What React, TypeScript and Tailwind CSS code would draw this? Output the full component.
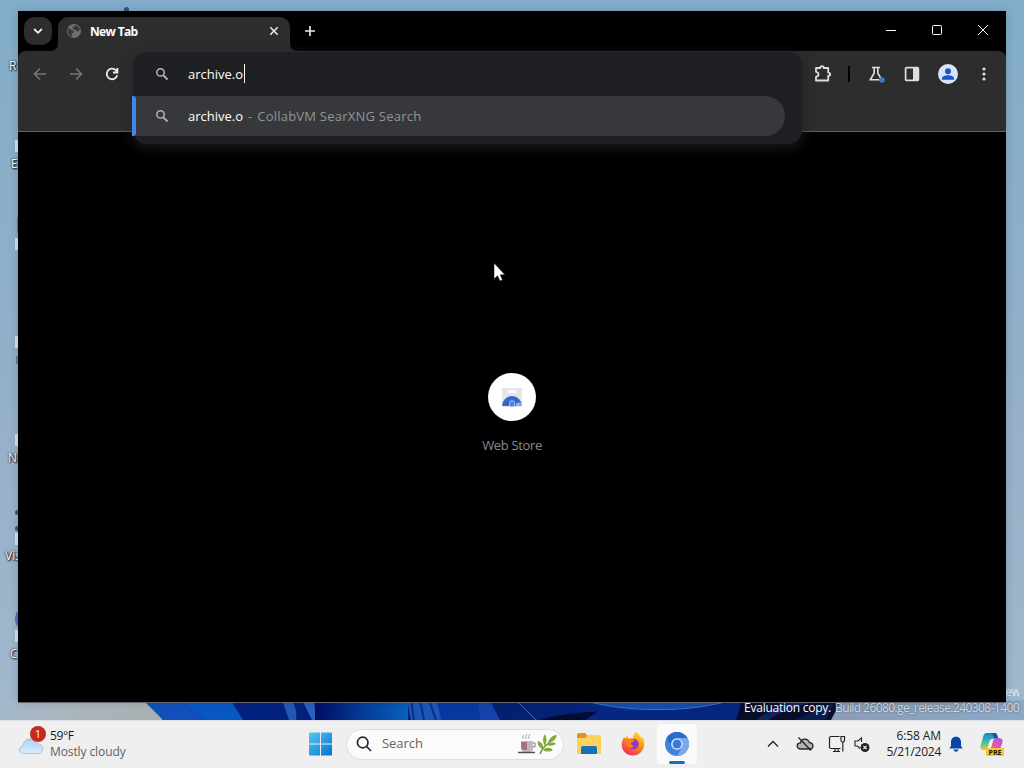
import type { ReactNode } from 'react';

interface DesktopLabelProps {
  text: string;
  className: string;
}

function DesktopLabel({ text, className }: DesktopLabelProps) {
  return (
    <span className={`absolute text-[12px] leading-4 text-white [text-shadow:0_0_2px_#000,1px_1px_2px_#000] ${className}`}>
      {text}
    </span>
  );
}

// Bloom wallpaper, only the edges show around the window
function Wallpaper() {
  return (
    <svg className="absolute left-0 top-[700px]" width="1024" height="20" viewBox="0 0 1024 20">
      <defs>
        <linearGradient id="sand" x1="0" x2="1" y1="0" y2="0">
          <stop offset="0" stopColor="#a3b7cb" />
          <stop offset="0.06" stopColor="#aab5bd" />
          <stop offset="0.15" stopColor="#a9b0b2" />
          <stop offset="0.82" stopColor="#8c9db6" />
          <stop offset="1" stopColor="#8ba9c6" />
        </linearGradient>
        <linearGradient id="petal" x1="0" x2="1" y1="0" y2="0">
          <stop offset="0" stopColor="#000d60" />
          <stop offset="0.5" stopColor="#043a98" />
          <stop offset="1" stopColor="#0860bd" />
        </linearGradient>
        <linearGradient id="petalDark" x1="0" x2="1" y1="0" y2="0">
          <stop offset="0" stopColor="#03206e" />
          <stop offset="0.35" stopColor="#042176" />
          <stop offset="0.6" stopColor="#062d90" />
          <stop offset="0.85" stopColor="#06257c" />
          <stop offset="1" stopColor="#020a2c" />
        </linearGradient>
      </defs>
      <rect width="1024" height="20" fill="url(#sand)" />
      <path d="M143 0H841C837 8 834 15 830 20H163C158 13 151 6 143 0Z" fill="#02207d" />
      <path d="M143 0H178C188 8 197 15 206 20H163Z" fill="#1150bb" />
      <path d="M178 0H231C235 8 240 14 243 20H206C197 15 188 8 178 0Z" fill="#0858c4" />
      <path d="M282 0H292C296 8 297 14 296 20H289Z" fill="#2458b4" />
      <path d="M302 0H314L316 20H312Z" fill="#2b60bd" />
      <rect x="315" y="0" width="93" height="20" fill="url(#petal)" />
      <path d="M407 0H443L447 20H411Z" fill="#1d56ba" />
      <path d="M411 0L414 20M420 0L424 20M429 0L436 20" fill="none" stroke="#0b2d8a" strokeWidth="2" />
      <path d="M437 0H479L480 20H441Z" fill="#0737a0" />
      <path d="M478 0H490L500 20H480Z" fill="#1443ac" />
      <path d="M490 0H720L700 20H500Z" fill="url(#petalDark)" />
      <path d="M540 20C575 9 625 10 680 14L710 20Z" fill="#050a32" />
      <path d="M516 1C525 8 530 14 536 20" fill="none" stroke="#4774c7" />
      <path d="M600 10C645 13 700 10 735 2H744L738 20H585Z" fill="#06277f" />
      <path d="M590 2C620 10 680 14 725 2Z" fill="#174dab" />
      <path d="M590 2C620 10 680 14 725 2" fill="none" stroke="#3b75c4" />
      <path d="M742 0H841L831 20H736Z" fill="#080e29" />
      <path d="M756 20C765 13 780 7 790 2H812C792 8 776 14 769 20Z" fill="#13225d" />
      <path d="M796 20C810 12 825 6 834 3L825 20Z" fill="#0d1d4b" />
    </svg>
  );
}

function DesktopIcons() {
  return (
    <>
      <DesktopLabel text="R" className="left-[9px] top-[58px]" />
      <DesktopLabel text="E" className="left-[11px] top-[156px]" />
      <DesktopLabel text="N" className="left-[8px] top-[450px]" />
      <DesktopLabel text="Vis" className="left-[5px] top-[548px]" />
      <DesktopLabel text="C" className="left-[10px] top-[646px]" />
      <div className="absolute left-[124px] top-[7px] h-3 w-[5px] rounded-t-full bg-[#354b91]" />
      <div className="absolute left-[15px] top-[140px] h-3 w-2 bg-[#dae4eb]" />
      <div className="absolute left-[17px] top-[217px] h-4 w-2 bg-[#a6596e]" />
      <div className="absolute left-[15px] top-[238px] h-3 w-2 bg-[#dae4eb]" />
      <div className="absolute left-[15px] top-[336px] h-3 w-2 bg-[#dae4eb]" />
      <div className="absolute left-[16px] top-[356px] h-2 w-2 bg-[#6c7896]" />
      <div className="absolute left-[15px] top-[434px] h-3 w-2 bg-[#dae4eb]" />
      <div className="absolute left-[15px] top-[510px] h-[5px] w-3 rounded-full bg-[#315b80]" />
      <div className="absolute left-[15px] top-[526px] h-[5px] w-3 rounded-full bg-[#315b80]" />
      <div className="absolute left-[15px] top-[533px] h-3 w-2 bg-[#dae4eb]" />
      <div className="absolute left-[15px] top-[607px] h-6 w-6 rounded-full bg-[#5372be]" />
      <div className="absolute left-[15px] top-[630px] h-3 w-2 bg-[#dae4eb]" />
    </>
  );
}

function SearchIcon() {
  return (
    <svg width="16" height="16" viewBox="0 0 16 16" fill="none" stroke="#b4b7bb" strokeWidth="1.5">
      <circle cx="6.5" cy="6.4" r="3.7" />
      <path d="M9.3 9.3L13.5 13.5" strokeWidth="1.8" />
    </svg>
  );
}

function TitleBar() {
  return (
    <div className="flex h-10 items-end bg-black">
      <button className="mb-[6px] ml-[6px] flex h-7 w-7 items-center justify-center rounded-[10px] bg-[#2d2d2d]">
        <svg width="12" height="12" viewBox="0 0 12 12" fill="none" stroke="#eee" strokeWidth="1.8">
          <path d="M2.2 4L6 7.8L9.8 4" />
        </svg>
      </button>
      <div className="relative ml-[6px] flex h-[34px] w-[232px] items-center rounded-t-[10px] bg-[#2d2d2d] pl-2 pr-[10px]">
        <svg className="absolute -left-2 bottom-0" width="8" height="8"><path d="M8 0V8H0Q8 8 8 0" fill="#2d2d2d" /></svg>
        <svg className="absolute -right-2 bottom-0" width="8" height="8"><path d="M0 0V8H8Q0 8 0 0" fill="#2d2d2d" /></svg>
        <svg className="-mt-[6px]" width="16" height="16" viewBox="0 0 16 16">
          <circle cx="8" cy="8" r="7" fill="#6c7074" />
          <path d="M1.9 5L5 6.5L8 8.2L6.7 10.2L5.5 10.5L6.1 14C3.8 13.5 2 11.3 2 8.5ZM8.4 2C11.4 2 13.5 4.2 14 6.5L11.7 8.8L9.5 7.1L7 6.3L6.5 4.3L8.7 3.6Z" fill="#35393c" />
        </svg>
        <span className="-mt-[4px] ml-2 flex-1 text-[12px] font-bold leading-4 tracking-[-0.65px] text-white">New Tab</span>
        <svg className="-mt-[6px]" width="12" height="12" viewBox="0 0 12 12" stroke="#eee" strokeWidth="1.5">
          <path d="M2.3 2.3L9.7 9.7M9.7 2.3L2.3 9.7" />
        </svg>
      </div>
      <svg className="mb-[13px] ml-[13px]" width="14" height="14" viewBox="0 0 14 14" stroke="#eee" strokeWidth="1.6">
        <path d="M7 2V12M2 7H12" />
      </svg>
      <div className="mb-[16px] ml-auto mr-[18px] flex items-center gap-[36px]">
        <svg width="10" height="10" viewBox="0 0 10 10"><path d="M0 5.5H10" stroke="#fff" /></svg>
        <svg width="10" height="10" viewBox="0 0 10 10"><rect x=".5" y=".5" width="9" height="9" rx="1" fill="none" stroke="#fff" /></svg>
        <svg width="10" height="10" viewBox="0 0 10 10"><path d="M0 0L10 10M10 0L0 10" stroke="#fff" /></svg>
      </div>
    </div>
  );
}

// Address field with its open suggestion list
function Omnibox() {
  return (
    <div className="relative z-10 mt-px h-[92px] w-[669px] shrink-0 rounded-[14px] bg-[#1f2024] text-[13px] shadow-[0_3px_12px_2px_rgba(32,36,33,0.65)]">
      <div className="flex h-11 items-center pl-[21px]">
        <SearchIcon />
        <span className="ml-[18px] mt-[2px] text-white">archive.o</span>
        <span className="ml-px h-[19px] w-px -translate-y-px bg-white" />
      </div>
      <div className="-ml-px flex h-10 w-[653px] items-center rounded-r-full bg-[#37383b]">
        <div className="h-10 w-1 rounded-r-[3px] bg-[#4285ed]" />
        <div className="ml-[18px]"><SearchIcon /></div>
        <span className="ml-[18px] mt-[2px] text-white">archive.o</span>
        <span className="ml-[5px] mt-[2px] text-[#929497]">-</span>
        <span className="ml-[5px] mt-[2px] tracking-[0.23px] text-[#929497]">CollabVM SearXNG Search</span>
      </div>
    </div>
  );
}

function Toolbar() {
  return (
    <div className="flex h-[81px] items-start rounded-t-[7px] border-b border-[#606060] bg-[#2d2d2d]">
      <div className="flex w-[115px] shrink-0 gap-5 pl-[14px] pt-[15px]">
        <svg width="16" height="16" viewBox="0 0 16 16" fill="none" stroke="#777" strokeWidth="1.6"><path d="M14 8H3M8 2.5L2.5 8L8 13.5" /></svg>
        <svg width="16" height="16" viewBox="0 0 16 16" fill="none" stroke="#777" strokeWidth="1.6"><path d="M2 8H13M8 2.5L13.5 8L8 13.5" /></svg>
        <svg width="16" height="16" viewBox="0 0 16 16" fill="none" stroke="#eee" strokeWidth="1.8"><path d="M13.2 9.2A5.3 5.3 0 1 1 11.8 4.2L13 5.6M13.4 2V6.5H9" /></svg>
      </div>
      <Omnibox />
      <div className="flex flex-1 items-center pl-[11px] pt-[13px]">
        <svg width="20" height="20" viewBox="0 0 20 20" fill="none" stroke="#dedede" strokeWidth="1.8">
          <path d="M3 4H7.3Q7.3 2.2 9 2.2T10.7 4H15.2V8.6Q17.2 8.6 17.2 10.3T15.2 12V16.5H3V12.8Q5.5 12.3 5.5 10.3T3 7.8Z" strokeLinejoin="round" />
        </svg>
        <div className="ml-[15px] h-4 w-[2px] bg-black" />
        <svg className="ml-[17px]" width="20" height="20" viewBox="0 0 20 20" fill="none" stroke="#dedede" strokeWidth="1.6">
          <path d="M5 3.5H13M7.2 4V9L3.3 15.8H14.7L10.8 9V4" />
          <circle cx="14.8" cy="15.8" r="2.9" fill="#4376c7" stroke="none" />
        </svg>
        <svg className="ml-[17px]" width="16" height="16" viewBox="0 0 16 16">
          <rect x="1.6" y="1.6" width="12.8" height="12.8" rx="1" fill="none" stroke="#dedede" strokeWidth="1.7" />
          <path d="M9 1.5H14V14.5H9Z" fill="#dedede" />
        </svg>
        <svg className="ml-[18px]" width="20" height="20" viewBox="0 0 20 20">
          <circle cx="10" cy="10" r="10" fill="#d7e5fb" />
          <circle cx="10" cy="7.2" r="3" fill="#1a57c4" />
          <path d="M4 15.7V14.2C4 12.4 7 11.3 10 11.3S16 12.4 16 14.2V15.7Z" fill="#1a57c4" />
        </svg>
        <svg className="ml-[18px]" width="16" height="16" viewBox="0 0 16 16" fill="#ddd">
          <circle cx="8" cy="3" r="1.6" /><circle cx="8" cy="8" r="1.6" /><circle cx="8" cy="13" r="1.6" />
        </svg>
      </div>
    </div>
  );
}

function BrowserWindow() {
  return (
    <div className="absolute left-[18px] top-[11px] flex h-[691px] w-[988px] flex-col bg-black shadow-[0_1px_0_#667,0_0_8px_rgba(20,40,60,0.22)]">
      <TitleBar />
      <Toolbar />
      <div className="flex flex-1 flex-col items-center bg-black pt-[241px]">
        <div className="flex h-12 w-12 items-center justify-center rounded-full bg-white">
          <svg width="24" height="24" viewBox="0 0 24 24">
            <path d="M2 3H22V20A2 2 0 0 1 20 22H4A2 2 0 0 1 2 20Z" fill="#e5e6e9" />
            <path d="M8 5H16V8H8Z" fill="#fff" />
            <path d="M2 21A10 10 0 0 1 22 21Z" fill="#346bd0" />
            <path d="M6 19A7 7 0 0 1 18 19L16 20A5 5 0 0 0 8 20Z" fill="#194da5" />
            <path d="M16 18L21 17.5L22 21H16Z" fill="#8bb3f2" />
            <circle cx="12" cy="18.8" r="3.1" fill="#4c86eb" stroke="#a9c6f7" />
          </svg>
        </div>
        <span className="mt-[15px] text-[13px] leading-[18px] tracking-[-0.35px] text-[#868b91]">Web Store</span>
      </div>
    </div>
  );
}

function TaskItem({ children, active }: { children: ReactNode; active?: boolean }) {
  return (
    <div className={`relative flex h-10 w-10 items-center justify-center rounded ${active ? 'bg-[#fafafa]' : ''}`}>
      {children}
      {active && <span className="absolute bottom-0 h-[3px] w-4 rounded-full bg-[#1671ba]" />}
    </div>
  );
}

function Weather() {
  return (
    <div className="flex w-[300px] items-start pl-[18px] pt-[3px]">
      <svg width="30" height="32" viewBox="0 0 30 32">
        <defs>
          <linearGradient id="cloud" x1="0" x2="0" y1="0" y2="1">
            <stop stopColor="#b2cdf1" />
            <stop offset="1" stopColor="#d8efff" />
          </linearGradient>
        </defs>
        <path d="M6 29.5C0 29.5 0 22.5 5 22C6 13 16 13 18.5 19.5C26 19.5 27 29.5 20 29.5Z" fill="url(#cloud)" stroke="#8eaed0" strokeWidth=".7" />
        <circle cx="20" cy="10" r="8" fill="#c42b1c" />
        <text x="20" y="14" textAnchor="middle" fill="#fff" fontSize="11">1</text>
      </svg>
      <div className="ml-[2px] pt-[4px] text-[12px] leading-4">
        <div className="tracking-[-0.4px] text-[#191919]">59°F</div>
        <div className="tracking-[-0.1px] text-[#626262]">Mostly cloudy</div>
      </div>
    </div>
  );
}

function FirefoxIcon() {
  return (
    <svg width="26" height="26" viewBox="0 0 26 26">
      <defs>
        <linearGradient id="fox" x1=".75" x2=".2" y1="0" y2="1">
          <stop stopColor="#ffe226" />
          <stop offset=".45" stopColor="#ff8b16" />
          <stop offset="1" stopColor="#ed226b" />
        </linearGradient>
      </defs>
      <path d="M15.5 1C20 3.5 20.5 6 21 7L22 5.5C24 8 24.5 11 24.2 14C23.7 20 19 24.5 13 24.5C6.5 24.5 1.7 20 1.7 13.5C1.7 10 3 7.5 4.5 6L5.5 8L6.5 5L9 8C10.5 7 12 7 13.2 7.5C13 4.5 14 2.5 15.5 1Z" fill="url(#fox)" />
      <circle cx="13.5" cy="13" r="5.2" fill="#8a3ac4" />
      <path d="M7.5 8.5C11 6.5 13.5 8.5 15 10L11.5 11.5C10.5 12.5 11.5 14.5 14 15C12.5 18 8 17 7 14C6.3 12 6.5 10 7.5 8.5Z" fill="#ff7d1d" />
    </svg>
  );
}

function ChromiumIcon() {
  return (
    <svg width="24" height="24" viewBox="0 0 24 24">
      <circle cx="12" cy="12" r="12" fill="#4184df" />
      <path d="M1.6 6A12 12 0 0 1 22.4 6H12A6 6 0 0 0 6.8 15Z" fill="#286dcc" />
      <path d="M22.4 6A12 12 0 0 1 12 24L17.2 15A6 6 0 0 0 12 6Z" fill="#79a8ec" />
      <circle cx="12" cy="12" r="5.8" fill="#edf5ff" />
      <circle cx="12" cy="12" r="4.5" fill="#3979dc" />
    </svg>
  );
}

function SearchBox() {
  return (
    <div className="ml-[6px] flex h-[31px] w-[218px] items-center rounded-full border border-[#dedede] bg-[#fbfbfb] pl-[8px] pr-[4px]">
      <svg width="18" height="18" viewBox="0 0 18 18" fill="none" stroke="#252a31" strokeWidth="1.7">
        <circle cx="7.7" cy="7.5" r="5.3" /><path d="M11.6 11.5L16 16" />
      </svg>
      <span className="ml-[9px] flex-1 text-[13px] tracking-[-0.05px] text-[#626262]">Search</span>
      <svg width="42" height="24" viewBox="0 0 42 24" fill="none">
        <path d="M4 9H16V17C16 19 14 20 12 20H8C5 20 4 18 4 15Z" fill="#c3b6c1" />
        <path d="M4 10H10V18H8C5 18 4 17 4 15Z" fill="#a1737a" />
        <path d="M16 11H18V15H16" stroke="#8a7884" strokeWidth="1" />
        <path d="M1 20.5H18" stroke="#594f59" strokeWidth="1.5" />
        <path d="M6 7Q5 5 7 3M9 7Q8 5 10 2M12 7Q11 5 13 2" stroke="#aaa0ab" />
        <path d="M23 22C25 16 29 13 38 6" stroke="#6b8d32" strokeWidth="1.3" />
        <path d="M26 17C21 15 20 11 21 9C25 11 27 13 26 17ZM28 14C25 9 26 5 28 2C30 6 30 10 28 14ZM31 11C32 6 36 3 40 3C39 7 36 10 31 11ZM26 18C29 15 33 15 36 18C32 20 29 20 26 18ZM30 13C33 10 37 10 39 12C36 14 33 14 30 13Z" fill="#83aa35" />
      </svg>
    </div>
  );
}

function Tray() {
  return (
    <div className="ml-auto flex items-center">
      <svg width="14" height="14" viewBox="0 0 14 14" fill="none" stroke="#202020" strokeWidth="1.3"><path d="M2 9.5L7 4.5L12 9.5" /></svg>
      <svg className="ml-[16px]" width="18" height="18" viewBox="0 0 18 18" stroke="#222" strokeWidth="1.3">
        <path d="M5 14C0 14 0 8 4.5 7.8C5.5 3 12 3 13.3 7.5C18 8 18 14 14 14Z" fill="#b3b3b3" />
        <path d="M2.5 2.5L15 15.5" fill="none" />
      </svg>
      <svg className="ml-[14px]" width="18" height="18" viewBox="0 0 18 18" fill="none" stroke="#222" strokeWidth="1.2">
        <path d="M11.5 1.5H3Q1.5 1.5 1.5 3V12Q1.5 13.5 3 13.5H12.5M5 16.5H12M7 14V16.5M10 14V16.5M14.8 7V16.5" />
        <path d="M13 1.5H16.5V5.5Q16.5 7 14.8 7T13 5.5Z" />
      </svg>
      <svg className="ml-[7px]" width="18" height="18" viewBox="0 0 18 18" fill="none" stroke="#222" strokeWidth="1.1">
        <path d="M8.5 7V3L5 6H2V11H4.5L7 13.5" />
        <circle cx="12" cy="12.5" r="4.5" fill="#222" stroke="none" />
        <path d="M10.4 10.9L13.6 14.1M13.6 10.9L10.4 14.1" stroke="#fff" />
      </svg>
      <div className="ml-[10px] w-[60px] text-right text-[12px] leading-4 text-[#222]">
        <div className="whitespace-nowrap tracking-[-0.1px]">6:58 AM</div>
        <div className="whitespace-nowrap tracking-[-0.25px]">5/21/2024</div>
      </div>
      <svg className="ml-[8px]" width="14" height="18" viewBox="0 0 14 18" fill="#0746a6">
        <path d="M2 7C2 0 12 0 12 7V11L13.7 13.5H.3L2 11ZM4.5 14.5H9.5C9 17.5 5 17.5 4.5 14.5Z" />
      </svg>
      <svg className="ml-[16px] mr-[19px]" width="26" height="26" viewBox="0 0 26 26">
        <defs>
          <linearGradient id="copilotLeft" x1="0" x2="0" y1="0" y2="1">
            <stop stopColor="#177fd8" />
            <stop offset=".55" stopColor="#47c0a0" />
            <stop offset="1" stopColor="#f4c829" />
          </linearGradient>
          <linearGradient id="copilotRight" x1="1" x2="0" y1="0" y2="1">
            <stop stopColor="#a35aee" />
            <stop offset=".55" stopColor="#e55b9f" />
            <stop offset="1" stopColor="#ff9b58" />
          </linearGradient>
        </defs>
        <path d="M8 2H16Q18 2 19 7L13 8Q11 8 10 12L8 19H4Q0 19 2 13L4 6Q5 2 8 2Z" fill="url(#copilotLeft)" />
        <path d="M16 7H20Q25 7 23 13L21 18Q20 22 16 22H8Q11 21 12 17L14 10Q15 7 16 7Z" fill="url(#copilotRight)" />
        <path d="M12 2H16Q18 2 19 7H15Q14 3 12 2Z" fill="#1556b3" />
        <rect x="7" y="17" width="18" height="8" rx="1" fill="#fcc62d" />
        <text x="16" y="23.7" textAnchor="middle" fontSize="7" fontWeight="700" fill="#17130a">PRE</text>
      </svg>
    </div>
  );
}

function Taskbar() {
  return (
    <div className="flex h-12 shrink-0 border-t border-[#dce1e7] bg-[#efefef] pb-px">
      <Weather />
      <div className="flex items-center">
        <TaskItem>
          <svg width="24" height="24" viewBox="0 0 24 24">
            <defs>
              <linearGradient id="start" x1="0" x2="1" y1="0" y2="1">
                <stop stopColor="#54c9f5" />
                <stop offset="1" stopColor="#0671cb" />
              </linearGradient>
            </defs>
            <path d="M2 .5H12V11.5H1V1.5Q1 .5 2 .5ZM13 .5H23Q24 .5 24 1.5V11.5H13ZM1 12.5H12V23.5H2Q1 23.5 1 22.5ZM13 12.5H24V22.5Q24 23.5 23 23.5H13Z" fill="url(#start)" />
          </svg>
        </TaskItem>
        <SearchBox />
        <div className="ml-[5px] flex gap-1">
          <TaskItem>
            <svg width="24" height="24" viewBox="0 0 24 24">
              <path d="M0 3Q0 1 2 1H8L11 4H22Q24 4 24 6V20H0Z" fill="#d6962a" />
              <path d="M0 6H8L11 3H22Q24 3 24 5V22H0Z" fill="#ffd05a" />
              <path d="M4 16Q4 14 6 14H18Q20 14 20 16V22H4Z" fill="#1671bd" />
            </svg>
          </TaskItem>
          <TaskItem><FirefoxIcon /></TaskItem>
          <TaskItem active><ChromiumIcon /></TaskItem>
        </div>
      </div>
      <Tray />
    </div>
  );
}

export default function App() {
  return (
    <div className="relative flex h-[768px] w-[1024px] flex-col overflow-hidden bg-[#efefef] font-['Open_Sans','Noto_Sans',sans-serif]">
      <div className="relative flex-1 bg-linear-to-b from-[#82adc9] via-[#93afc8] to-[#a1b8cc]">
        <Wallpaper />
        <DesktopIcons />
        <div className="absolute right-[5px] top-[684px] flex flex-col items-end whitespace-nowrap text-[12px] leading-4 text-[#e3e8ef]">
          <div className="h-4 w-[14px] overflow-hidden tracking-[-0.3px]">ew</div>
          <div className="flex gap-1">
            <span className="tracking-[-0.25px] text-white">Evaluation copy.</span>
            <span className="tracking-[-0.58px] text-[#d5dbe4] [text-shadow:0_0_2px_#45536a]">Build 26080.ge_release.240308-1400</span>
          </div>
        </div>
        <BrowserWindow />
      </div>
      <Taskbar />
      <svg className="absolute left-[493px] top-[262px]" width="13" height="20" viewBox="0 0 13 20">
        <path d="M1 1V17L4.5 13.7L7 19L9.5 18L7.3 12.8H12Z" fill="#fff" stroke="#000" strokeWidth=".5" />
      </svg>
    </div>
  );
}
